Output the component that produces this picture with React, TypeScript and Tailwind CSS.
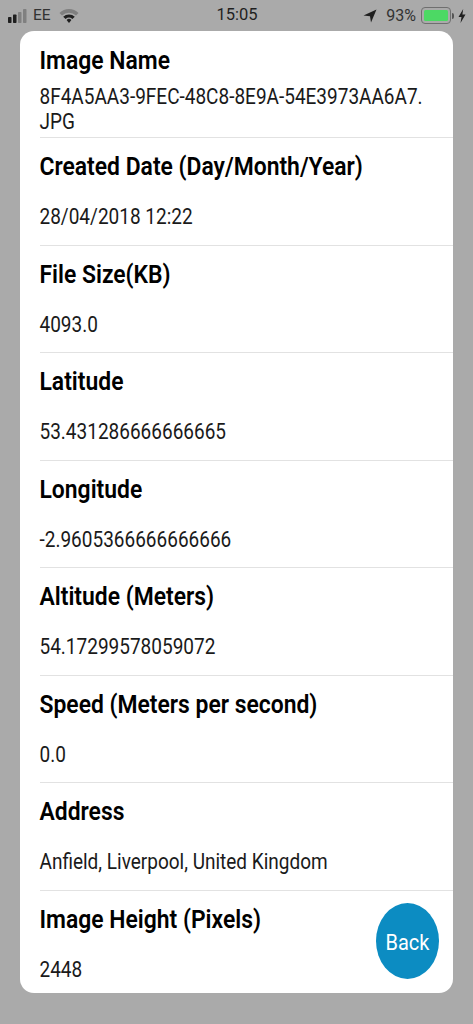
import React from "react";

const rows = [
  ["Created Date (Day/Month/Year)", "28/04/2018 12:22"],
  ["File Size(KB)", "4093.0"],
  ["Latitude", "53.431286666666665"],
  ["Longitude", "-2.9605366666666666"],
  ["Altitude (Meters)", "54.17299578059072"],
  ["Speed (Meters per second)", "0.0"],
  ["Address", "Anfield, Liverpool, United Kingdom"],
];

function Title({ children }: { children: React.ReactNode }) {
  return (
    <div className="text-[22.9px] font-semibold leading-[30px] text-black origin-left scale-y-[1.14]">{children}</div>
  );
}

function Value({ children }: { children: React.ReactNode }) {
  return <div className="text-[19px] leading-[22px] text-[#1a1a1a] origin-left scale-y-[1.14]">{children}</div>;
}

export default function App() {
  return (
    <div className="w-[473px] h-[1024px] bg-[#aaaaaa] flex flex-col overflow-hidden font-['Roboto',sans-serif]">
      <div className="h-[31px] shrink-0 flex items-center justify-between pl-[8px] pr-[7px] text-[#222222] text-[15.5px] leading-none">
        <div className="flex items-center gap-[5px] w-[150px]">
          <svg width="20" height="14" viewBox="0 0 20 14">
            <rect x="0" y="8" width="3.5" height="6" rx="0.7" fill="#1f1f1f" />
            <rect x="5" y="5.5" width="3.5" height="8.5" rx="0.7" fill="#1f1f1f" />
            <rect x="10" y="3" width="3.5" height="11" rx="0.7" fill="#808080" />
            <rect x="15" y="0" width="3.5" height="14" rx="0.7" fill="#808080" />
          </svg>
          <span className="text-[#333333]">EE</span>
          <svg width="20" height="16" viewBox="0 0 20 16" className="ml-[3px]">
            <path d="M0.5 5 A13.5 13.5 0 0 1 19.5 5 L17 7.6 A10 10 0 0 0 3 7.6 Z" fill="#7f7f7f" />
            <path d="M4.2 8.7 A8.5 8.5 0 0 1 15.8 8.7 L13.4 11 A5.2 5.2 0 0 0 6.6 11 Z" fill="#1f1f1f" />
            <path d="M7.6 12 A3.5 3.5 0 0 1 12.4 12 L10 15 Z" fill="#1f1f1f" />
          </svg>
        </div>
        <span className="text-[#1f1f1f] text-[16.5px]">15:05</span>
        <div className="flex items-center justify-end w-[150px]">
          <svg width="14" height="14" viewBox="0 0 14 14" className="mr-[9px]">
            <path d="M13.5 0.5 L0.5 6.5 L7 7.2 L8 13.5 Z" fill="#1f1f1f" />
          </svg>
          <span className="text-[#333333] text-[16px] mr-[5px]">93%</span>
          <div className="w-[30px] h-[17px] rounded-[4px] border border-[#6f6f6f] p-[2px]">
            <div className="w-full h-full rounded-[1.5px] bg-[#4cd964]" />
          </div>
          <div className="w-[2px] h-[6px] bg-[#555555] rounded-r-[2px] ml-[1px]" />
          <svg width="8" height="14" viewBox="0 0 8 14" className="ml-[4px]">
            <path d="M5.2 0 L0.5 8 L3.5 8 L2.5 14 L7.5 5.5 L4.4 5.5 Z" fill="#1f1f1f" />
          </svg>
        </div>
      </div>
      <div className="relative w-[433px] h-[962px] ml-[20px] bg-white rounded-[14px] overflow-hidden">
        <div className="ml-[19.5px] h-[107px] pt-[15px] border-b border-[#e2e2e2]">
          <Title>Image Name</Title>
          <div className="mt-[11.5px]">
            <Value>
              8F4A5AA3-9FEC-48C8-8E9A-54E3973AA6A7.
              <br />
              JPG
            </Value>
          </div>
        </div>
        {rows.map(([t, v]) => (
          <div key={t} className="ml-[19.5px] h-[107.5px] pt-[14px] border-b border-[#e2e2e2]">
            <Title>{t}</Title>
            <div className="mt-[24px]">
              <Value>{v}</Value>
            </div>
          </div>
        ))}
        <div className="ml-[19.5px] pt-[14px]">
          <Title>Image Height (Pixels)</Title>
          <div className="mt-[24px]">
            <Value>2448</Value>
          </div>
        </div>
        <button className="absolute left-[356px] top-[872px] w-[63px] h-[76px] rounded-[50%] bg-[#0c8cc2] text-white text-[20px] flex items-center justify-center pt-[1px]">
          <span className="scale-y-[1.14]">Back</span>
        </button>
      </div>
    </div>
  );
}
